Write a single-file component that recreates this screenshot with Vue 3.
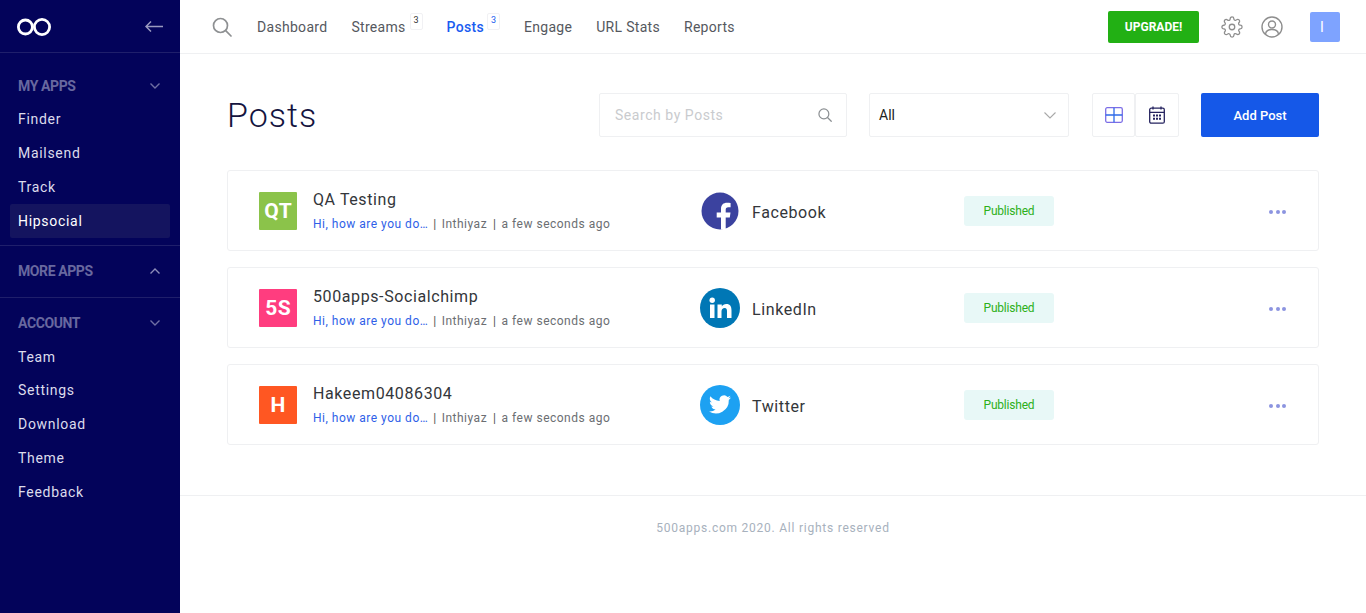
<script setup>
const myApps = ['Finder', 'Mailsend', 'Track', 'Hipsocial']
const account = ['Team', 'Settings', 'Download', 'Theme', 'Feedback']
const navItems = [
  { label: 'Dashboard' },
  { label: 'Streams', badge: 3 },
  { label: 'Posts', badge: 3, active: true },
  { label: 'Engage' },
  { label: 'URL Stats' },
  { label: 'Reports' }
]
const posts = [
  { id: 1, initials: 'QT', color: '#8bc34a', title: 'QA Testing', network: 'Facebook' },
  { id: 2, initials: '5S', color: '#ff3d7f', title: '500apps-Socialchimp', network: 'LinkedIn' },
  { id: 3, initials: 'H', color: '#ff5722', title: 'Hakeem04086304', network: 'Twitter' }
]
</script>

<template>
  <div class="layout">
    <aside class="sidebar">
      <div class="brand">
        <svg class="logo" width="34" height="18" viewBox="0 0 34 18" fill="none" stroke="#fff" stroke-width="2.8">
          <circle cx="8.4" cy="9" r="7" />
          <circle cx="25" cy="9" r="7.6" />
        </svg>
        <svg width="18" height="11" viewBox="0 0 18 11" fill="none" stroke="#9a9ac0" stroke-width="1.5">
          <path d="M18 5.5H1M6 .5l-5 5 5 5" />
        </svg>
      </div>

      <section class="group group-first">
        <div class="group-title title-short">
          <span>MY APPS</span>
          <svg width="12" height="8" viewBox="0 0 12 8" fill="none" stroke="#6f6fa3" stroke-width="1.4"><path d="m1.5 1.5 4.5 4.5 4.5-4.5" /></svg>
        </div>
        <a v-for="app in myApps" :key="app" class="side-link" :class="{ current: app === 'Hipsocial' }">{{ app }}</a>
      </section>

      <section class="group group-collapsed">
        <div class="group-title">
          <span>MORE APPS</span>
          <svg width="12" height="8" viewBox="0 0 12 8" fill="none" stroke="#8d8db8" stroke-width="1.4"><path d="m1.5 6.5 4.5-4.5 4.5 4.5" /></svg>
        </div>
      </section>

      <section class="group group-last">
        <div class="group-title title-account">
          <span>ACCOUNT</span>
          <svg width="12" height="8" viewBox="0 0 12 8" fill="none" stroke="#6f6fa3" stroke-width="1.4"><path d="m1.5 1.5 4.5 4.5 4.5-4.5" /></svg>
        </div>
        <a v-for="item in account" :key="item" class="side-link side-link-tight">{{ item }}</a>
      </section>
    </aside>

    <div class="main">
      <header class="topbar">
        <svg class="top-search" width="20" height="20" viewBox="0 0 20 20" fill="none" stroke="#8e9092" stroke-width="1.7">
          <circle cx="8.5" cy="8.5" r="7" />
          <path d="m13.7 13.7 5.3 5.3" stroke-linecap="round" />
        </svg>
        <nav class="topnav">
          <a v-for="item in navItems" :key="item.label" class="nav-link" :class="{ active: item.active }">
            {{ item.label }}
            <span v-if="item.badge" class="nav-badge">{{ item.badge }}</span>
          </a>
        </nav>
        <button class="upgrade">UPGRADE!</button>
        <svg class="gear" width="22" height="22" viewBox="0 0 24 24" fill="none" stroke="#8e8e8e" stroke-width="1.4">
          <circle cx="12" cy="12" r="3" />
          <path d="M19.4 15a1.65 1.65 0 0 0 .33 1.82l.06.06a2 2 0 0 1 0 2.83 2 2 0 0 1-2.83 0l-.06-.06a1.65 1.65 0 0 0-1.82-.33 1.65 1.65 0 0 0-1 1.51V21a2 2 0 0 1-2 2 2 2 0 0 1-2-2v-.09A1.65 1.65 0 0 0 9 19.4a1.65 1.65 0 0 0-1.82.33l-.06.06a2 2 0 0 1-2.83 0 2 2 0 0 1 0-2.83l.06-.06a1.65 1.65 0 0 0 .33-1.82 1.65 1.65 0 0 0-1.51-1H3a2 2 0 0 1-2-2 2 2 0 0 1 2-2h.09A1.65 1.65 0 0 0 4.6 9a1.65 1.65 0 0 0-.33-1.82l-.06-.06a2 2 0 0 1 0-2.83 2 2 0 0 1 2.83 0l.06.06a1.65 1.65 0 0 0 1.82.33H9a1.65 1.65 0 0 0 1-1.51V3a2 2 0 0 1 2-2 2 2 0 0 1 2 2v.09a1.65 1.65 0 0 0 1 1.51 1.65 1.65 0 0 0 1.82-.33l.06-.06a2 2 0 0 1 2.83 0 2 2 0 0 1 0 2.83l-.06.06a1.65 1.65 0 0 0-.33 1.82V9a1.65 1.65 0 0 0 1.51 1H21a2 2 0 0 1 2 2 2 2 0 0 1-2 2h-.09a1.65 1.65 0 0 0-1.51 1z" />
        </svg>
        <svg class="profile" width="22" height="22" viewBox="0 0 22 22" fill="none" stroke="#8e8e8e" stroke-width="1.4">
          <circle cx="11" cy="11" r="10" />
          <circle cx="11" cy="8.5" r="3.5" />
          <path d="M4.5 18c.5-3.500 3-4.500 6.500-4.500s6 1 6.500 4.500" />
        </svg>
        <div class="avatar">I</div>
      </header>

      <main class="content">
        <div class="page-head">
          <h1>Posts</h1>
          <div class="search-box">
            <span>Search by Posts</span>
            <svg width="14" height="14" viewBox="0 0 15 15" fill="none" stroke="#8b8f92" stroke-width="1.3">
              <circle cx="6.3" cy="6.3" r="5.3" />
              <path d="m10.2 10.2 4 4" stroke-linecap="round" />
            </svg>
          </div>
          <div class="select-box">
            <span>All</span>
            <svg width="12" height="7" viewBox="0 0 12 7" fill="none" stroke="#a8a8a8" stroke-width="1.1"><path d="m.5.5 5.500 5.500 5.500-5.500" /></svg>
          </div>
          <div class="view-btns">
            <button class="view-btn">
              <svg width="18" height="16" viewBox="0 0 18 16" fill="none" stroke-width="1.3">
                <rect x=".7" y=".7" width="16.6" height="14.6" rx="1.500" stroke="#7c6ee6" />
                <path d="M9 .7v14.600M.7 8h16.600" stroke="#2f6be8" />
              </svg>
            </button>
            <button class="view-btn">
              <svg width="16" height="18" viewBox="0 0 16 18" fill="none">
                <rect x=".7" y="2.2" width="14.6" height="15" rx="1.500" stroke="#25235f" stroke-width="1.3" />
                <path d="M.7 6.300h14.600M4 .5v3M12 .5v3" stroke="#25235f" stroke-width="1.3" />
                <path d="M4 8.500h2v2H4zM7 8.500h2v2H7zM10 8.500h2v2h-2zM4 11.800h2v2H4zM7 11.800h2v2H7zM10 11.800h2v2h-2z" fill="#25235f" />
              </svg>
            </button>
          </div>
          <button class="add-btn">Add Post</button>
        </div>

        <div class="post-list">
          <article v-for="post in posts" :key="post.id" class="post-card">
            <div class="post-thumb" :style="{ background: post.color }">{{ post.initials }}</div>
            <div class="post-info">
              <div class="post-title">{{ post.title }}</div>
              <div class="post-meta">
                <span class="post-text">Hi, how are you do…</span>
                <span class="sep">|</span>
                <span class="author">Inthiyaz</span>
                <span class="sep">|</span>
                <span>a few seconds ago</span>
              </div>
            </div>
            <div class="post-network">
              <svg v-if="post.network === 'Facebook'" width="40" height="40" viewBox="0 0 40 40">
                <circle cx="20" cy="20" r="18.5" fill="#3b429f" />
                <path d="M21 38.500V26.500h-4.300v-5H21V18c0-4.300 2.500-6.300 6-6.300 1.600 0 3 .1 3.600.2v4.400h-2.300c-2 0-2.600 1-2.600 2.500v2.700h4.800l-.7 5h-4.100v12z" fill="#fff" />
              </svg>
              <svg v-else-if="post.network === 'LinkedIn'" width="40" height="40" viewBox="0 0 40 40">
                <circle cx="20" cy="20" r="20" fill="#0077b5" />
                <circle cx="12.200" cy="12.300" r="2.700" fill="#fff" />
                <path d="M10 16.500h4.500V30H10zM17.500 16.500h4.300v1.900c.8-1.300 2.400-2.300 4.500-2.300 4 0 5.200 2.500 5.200 6.300V30h-4.500v-6.700c0-1.900-.4-3.300-2.300-3.300-2 0-3.200 1.300-3.200 3.500V30h-4z" fill="#fff" />
              </svg>
              <svg v-else width="40" height="40" viewBox="0 0 40 40">
                <circle cx="20" cy="20" r="20" fill="#1da1f2" />
                <path d="M31 12.600c-.8.400-1.700.600-2.600.7.900-.6 1.600-1.400 2-2.500-.9.500-1.900.9-2.900 1.100a4.500 4.500 0 0 0-7.800 4.100c-3.800-.2-7.100-2-9.300-4.800-1.200 2.100-.6 4.800 1.400 6.100-.7 0-1.400-.2-2-.6 0 2.200 1.500 4.100 3.600 4.600-.7.200-1.400.2-2 .1.600 1.800 2.300 3.100 4.200 3.100A9.100 9.100 0 0 1 9 26.400a12.900 12.900 0 0 0 19.800-11.400c.9-.7 1.600-1.500 2.200-2.400z" fill="#fff" />
              </svg>
              <span class="net-name">{{ post.network }}</span>
            </div>
            <div class="post-status">Published</div>
            <div class="post-more"><i></i><i></i><i></i></div>
          </article>
        </div>
      </main>

      <footer class="footer">500apps.com 2020. All rights reserved</footer>
    </div>
  </div>
</template>

<style>
html, body {
  margin: 0;
  background: #fff;
}
</style>

<style scoped>
* {
  box-sizing: border-box;
}

.layout {
  display: flex;
  min-height: 613px;
  font-family: Roboto, "Liberation Sans", sans-serif;
}

.sidebar {
  width: 180px;
  flex-shrink: 0;
  background: #03035a;
}

.brand {
  height: 53px;
  padding: 0 17px;
  display: flex;
  align-items: center;
  justify-content: space-between;
  border-bottom: 1px solid #1f1f6b;
}

.logo {
  margin-top: 2px;
}

.group {
  padding: 0 10px;
  border-bottom: 1px solid #1f1f6b;
}

.group-first {
  padding-top: 16px;
  padding-bottom: 7px;
}

.group-collapsed {
  padding-top: 8px;
  padding-bottom: 9px;
}

.group-last {
  padding-top: 8px;
  border-bottom: none;
}

.group-title {
  height: 34px;
  padding: 0 9px 0 8px;
  display: flex;
  align-items: center;
  justify-content: space-between;
  font-size: 14px;
  font-weight: 700;
  letter-spacing: -.4px;
  color: #68689f;
}

.title-short {
  height: 33px;
}

.title-account {
  height: 34.5px;
}

.side-link {
  display: block;
  height: 34px;
  line-height: 34px;
  padding-left: 8px;
  border-radius: 2px;
  font-size: 14px;
  letter-spacing: .7px;
  color: #dcdcec;
}

.side-link-tight {
  height: 33.75px;
  line-height: 33.75px;
}

.side-link.current {
  background: #14145f;
  color: #fff;
}

.main {
  flex: 1;
  min-width: 0;
  display: flex;
  flex-direction: column;
}

.topbar {
  height: 54px;
  padding-right: 26px;
  display: flex;
  align-items: center;
  border-bottom: 1px solid #eff0f2;
}

.top-search {
  margin-left: 32px;
}

.topnav {
  display: flex;
  gap: 24px;
  margin-left: 25px;
  margin-right: auto;
}

.nav-link {
  display: flex;
  font-size: 14px;
  letter-spacing: .3px;
  color: #55585e;
}

.nav-link.active {
  color: #1a5cf0;
  font-weight: 500;
}

.nav-badge {
  width: 13px;
  height: 17px;
  margin: -6px 0 0 4px;
  border: 1px solid #f1f1f4;
  border-radius: 2px;
  font-size: 9px;
  font-weight: 400;
  line-height: 13px;
  text-align: center;
  letter-spacing: 0;
  color: #333;
}

.nav-link.active .nav-badge {
  margin-left: 3px;
  color: #1a5cf0;
}

.upgrade {
  width: 91px;
  height: 32px;
  padding: 0;
  border: none;
  border-radius: 2px;
  background: #22b014;
  font-family: inherit;
  font-size: 12px;
  font-weight: 700;
  color: #fff;
}

.gear {
  margin-left: 22px;
}

.profile {
  margin-left: 18px;
}

.avatar {
  width: 30px;
  height: 30px;
  margin-left: 27px;
  padding-right: 6px;
  border-radius: 2px;
  background: #7ea3ff;
  color: #fff;
  font-size: 14px;
  text-align: center;
  line-height: 30px;
}

.content {
  height: 442px;
  padding: 39px 47px 0;
  border-bottom: 1px solid #eff0f2;
}

.page-head {
  height: 44px;
  display: flex;
  align-items: center;
  margin-bottom: 33px;
}

h1 {
  margin: 0 auto 0 0;
  font-size: 34px;
  font-weight: 300;
  letter-spacing: 1px;
  color: #14143f;
}

.search-box {
  width: 248px;
  height: 44px;
  padding: 0 14px 0 15px;
  display: flex;
  align-items: center;
  justify-content: space-between;
  border: 1px solid #eff0f2;
  border-radius: 2px;
  font-size: 14px;
  letter-spacing: .55px;
  color: #c9cbce;
}

.select-box {
  width: 200px;
  height: 44px;
  margin-left: 22px;
  padding: 0 12px 0 9px;
  display: flex;
  align-items: center;
  justify-content: space-between;
  border: 1px solid #eff0f2;
  border-radius: 2px;
  font-size: 14px;
  color: #222;
}

.view-btns {
  display: flex;
  margin-left: 23px;
}

.view-btn {
  width: 44px;
  height: 44px;
  padding: 0;
  display: flex;
  align-items: center;
  justify-content: center;
  background: #fff;
  border: 1px solid #eff0f2;
  border-radius: 2px;
}

.view-btn:first-child {
  width: 43px;
}

.add-btn {
  width: 118px;
  height: 44px;
  margin-left: 22px;
  border: none;
  border-radius: 2px;
  background: #1558e8;
  font-family: inherit;
  font-size: 13px;
  font-weight: 500;
  color: #fff;
}

.post-list {
  display: flex;
  flex-direction: column;
  gap: 16px;
}

.post-card {
  height: 81px;
  padding: 0 32px 0 31px;
  display: flex;
  align-items: center;
  border: 1px solid #eff0f2;
  border-radius: 3px;
}

.post-thumb {
  width: 38px;
  height: 38px;
  flex-shrink: 0;
  border-radius: 1px;
  color: #fff;
  font-size: 21px;
  font-weight: 700;
  letter-spacing: .5px;
  text-indent: .5px;
  line-height: 38px;
  text-align: center;
}

.post-info {
  width: 387px;
  margin-left: 16px;
  flex-shrink: 0;
}

.post-title {
  margin-top: -1px;
  font-size: 16px;
  letter-spacing: .6px;
  color: #33363a;
}

.post-meta {
  margin-top: 8px;
  display: flex;
  gap: 5px;
  font-size: 12px;
  letter-spacing: .5px;
  color: #6b6e72;
}

.post-text {
  color: #2f5fe8;
}

.author {
  margin-right: 1px;
}

.sep {
  color: #555;
}

.post-network {
  width: 264px;
  flex-shrink: 0;
  display: flex;
  align-items: center;
  gap: 12px;
}

.net-name {
  margin-top: 4px;
  font-size: 16px;
  letter-spacing: .6px;
  color: #33363a;
}

.post-status {
  width: 90px;
  height: 30px;
  flex-shrink: 0;
  border-radius: 3px;
  background: #e8f8f7;
  color: #2cb01a;
  font-size: 12px;
  letter-spacing: -.2px;
  line-height: 30px;
  text-align: center;
}

.post-more {
  margin: 2px 0 0 auto;
  display: flex;
  gap: 2.5px;
}

.post-more i {
  width: 4px;
  height: 4px;
  border-radius: 50%;
  background: #8c94e0;
}

.footer {
  padding-top: 25px;
  text-align: center;
  font-size: 12px;
  letter-spacing: .76px;
  color: #a7b1bd;
}
</style>
